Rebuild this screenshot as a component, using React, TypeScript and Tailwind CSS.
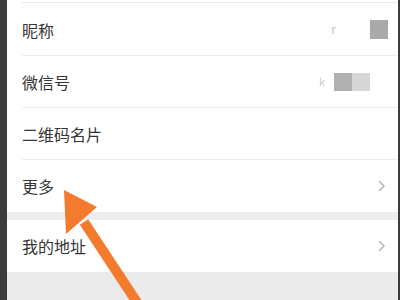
import React from 'react';

const Chevron: React.FC = () => (
  <svg className="w-[8px] h-[12px]" viewBox="0 0 8 12" fill="none">
    <path d="M1.5 1.5 L6 6 L1.5 10.5" stroke="#b8b8b8" strokeWidth="1.6" strokeLinecap="round" strokeLinejoin="round" />
  </svg>
);

const Row: React.FC<{ label: string; last?: boolean; children?: React.ReactNode }> = ({ label, last, children }) => (
  <div className="pl-[15px] bg-white">
    <div className={`h-[52px] flex items-center pr-[12px] ${last ? '' : 'border-b border-[#ececec]'}`}>
      <span className="text-[16px] text-[#353535] flex-1">{label}</span>
      {children}
    </div>
  </div>
);

const App: React.FC = () => {
  return (
    <div
      className="relative w-[400px] h-[300px] overflow-hidden flex bg-white"
      style={{ fontFamily: '"Noto Sans CJK SC", "Noto Sans", sans-serif' }}
    >
      <div className="w-[7px] bg-[#3c3c3c]" />
      <div className="flex-1 flex flex-col">
        <div className="h-[4px] bg-white pl-[15px]">
          <div className="h-[3px] border-b border-[#ececec]" />
        </div>
        <Row label="昵称">
          <span className="text-[12px] text-[#c4c4c4] mr-[34px] -mt-[2px]">r</span>
          <div className="w-[18px] h-[19px] bg-[#a9a9a9] mr-[-2px]" />
        </Row>
        <Row label="微信号">
          <span className="text-[11px] text-[#cdcdcd] mr-[9px]">k</span>
          <div className="w-[18px] h-[18px] bg-[#b1b1b1]" />
          <div className="w-[18px] h-[18px] bg-[#d6d6d6] mr-[16px]" />
        </Row>
        <Row label="二维码名片" />
        <Row label="更多" last>
          <Chevron />
        </Row>
        <div className="h-[8px] bg-[#ededed]" />
        <Row label="我的地址" last>
          <Chevron />
        </Row>
        <div className="flex-1 bg-[#ebebeb]" />
      </div>
      <div className="w-[2px] bg-[#3c3c3c]" />

      <svg className="absolute left-0 top-0 w-[400px] h-[300px] pointer-events-none" viewBox="0 0 400 300">
        <line x1="84" y1="222" x2="142" y2="310" stroke="#f47b2e" strokeWidth="10" />
        <polygon points="64,190 66,234 97,207" fill="#f47b2e" />
      </svg>
    </div>
  );
};

export default App;
